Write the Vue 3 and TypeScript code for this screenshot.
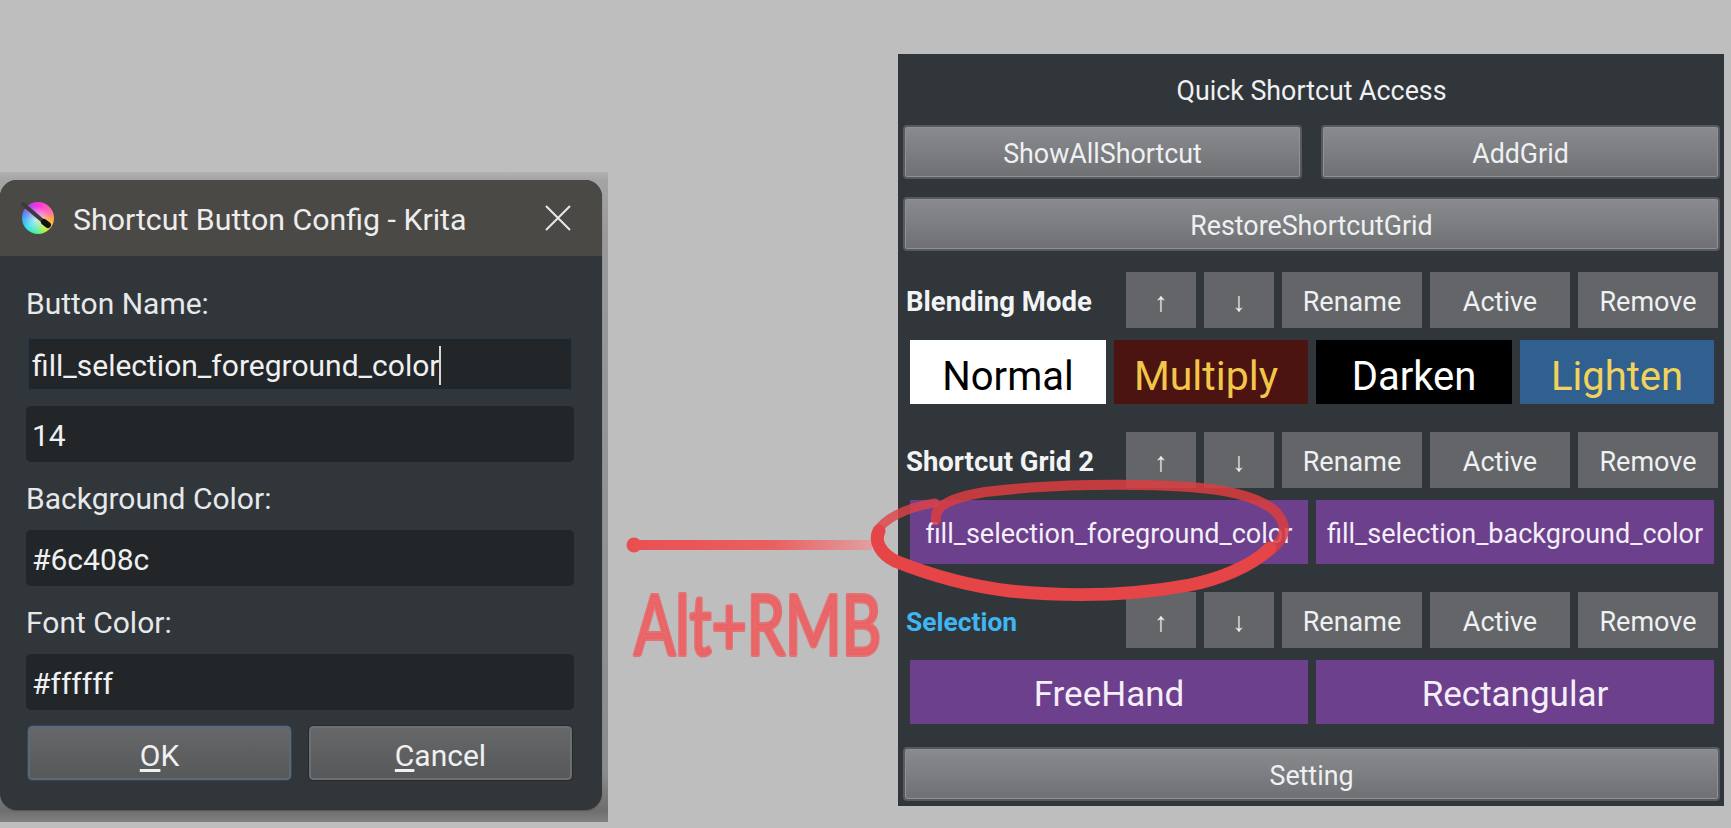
<script setup lang="ts">
interface GridButton {
  text: string
  cls: string
}

interface Section {
  name: string
  nameCls?: string
  grid: string
  buttons: GridButton[]
}

const rowActions = ['↑', '↓', 'Rename', 'Active', 'Remove']

const sections: Section[] = [
  {
    name: 'Blending Mode',
    grid: 'four',
    buttons: [
      { text: 'Normal', cls: 'white big' },
      { text: 'Multiply', cls: 'maroon big' },
      { text: 'Darken', cls: 'black big' },
      { text: 'Lighten', cls: 'blue big' },
    ],
  },
  {
    name: 'Shortcut Grid 2',
    grid: 'two',
    buttons: [
      { text: 'fill_selection_foreground_color', cls: 'purple' },
      { text: 'fill_selection_background_color', cls: 'purple' },
    ],
  },
  {
    name: 'Selection',
    nameCls: 'active-name',
    grid: 'two',
    buttons: [
      { text: 'FreeHand', cls: 'purple mid' },
      { text: 'Rectangular', cls: 'purple mid' },
    ],
  },
]
</script>

<template>
  <div class="page">
    <div class="shadow-frame">
      <div class="dialog">
        <div class="titlebar">
          <div class="logo">
            <svg width="36" height="32" viewBox="0 0 36 32">
              <path d="M3 3 L24 21" stroke="#3a3a3c" stroke-width="4" stroke-linecap="round" />
              <path d="M24 21 L28 24" stroke="#111" stroke-width="6" stroke-linecap="round" />
            </svg>
          </div>
          <span class="title">Shortcut Button Config - Krita</span>
          <svg class="close" width="26" height="26" viewBox="0 0 26 26">
            <path d="M1 1 L25 25 M25 1 L1 25" stroke="#e8e8e8" stroke-width="2" />
          </svg>
        </div>
        <div class="form">
          <div class="label first">Button Name:</div>
          <div class="field focused">fill_selection_foreground_color<i class="caret"></i></div>
          <div class="field second">14</div>
          <div class="label">Background Color:</div>
          <div class="field">#6c408c</div>
          <div class="label">Font Color:</div>
          <div class="field">#ffffff</div>
          <div class="dialog-buttons">
            <button class="dlg-btn ok"><u>O</u>K</button>
            <button class="dlg-btn"><u>C</u>ancel</button>
          </div>
        </div>
      </div>
    </div>

    <div class="panel">
      <div class="panel-title">Quick Shortcut Access</div>
      <div class="top-row">
        <button class="tool-btn">ShowAllShortcut</button>
        <button class="tool-btn">AddGrid</button>
      </div>
      <div class="top-row restore">
        <button class="tool-btn">RestoreShortcutGrid</button>
      </div>

      <div v-for="section in sections" :key="section.name" class="section">
        <div class="section-row">
          <span class="section-name" :class="section.nameCls">{{ section.name }}</span>
          <button v-for="action in rowActions" :key="action" class="row-btn">{{ action }}</button>
        </div>
        <div class="grid" :class="section.grid">
          <div v-for="btn in section.buttons" :key="btn.text" class="grid-btn" :class="btn.cls">{{ btn.text }}</div>
        </div>
      </div>

      <div class="top-row setting">
        <button class="tool-btn">Setting</button>
      </div>
    </div>

    <!-- hand drawn annotation on top of the screenshot -->
    <svg class="sketch" width="1731" height="828" viewBox="0 0 1731 828">
      <defs>
        <linearGradient id="lineFade" x1="626" x2="872" y1="0" y2="0" gradientUnits="userSpaceOnUse">
          <stop offset="0" stop-color="#ea4f50" />
          <stop offset="0.6" stop-color="#e96062" />
          <stop offset="1" stop-color="#e0a0a0" />
        </linearGradient>
        <filter id="soft" x="-5%" y="-5%" width="110%" height="110%">
          <feGaussianBlur stdDeviation="0.7" />
        </filter>
      </defs>
      <g filter="url(#soft)">
        <circle cx="634" cy="545" r="7.5" fill="#ea4f50" />
        <rect x="634" y="540" width="238" height="10" fill="url(#lineFade)" />
        <path
          d="M936 520 C934 506 950 498 985 492 C1050 484 1130 483 1190 487 C1245 491 1284 505 1284 530 C1282 552 1240 572 1190 584"
          fill="none"
          stroke="#dc3c40"
          stroke-opacity="0.85"
          stroke-width="10"
          stroke-linecap="round"
        />
        <path
          d="M880 527 C892 514 914 506 935 503"
          fill="none"
          stroke="#e04246"
          stroke-opacity="0.8"
          stroke-width="9"
          stroke-linecap="round"
        />
        <path
          d="M1270 548 C1250 568 1215 580 1190 585 C1130 596 1070 597 1010 591 C960 585 920 571 895 561 C880 553 874 541 879 531"
          fill="none"
          stroke="#e54447"
          stroke-width="13"
          stroke-linecap="round"
        />
      </g>
      <text class="sketch-text" transform="translate(634 655) scale(1 1.38)">Alt+RMB</text>
    </svg>
  </div>
</template>

<style scoped>
.page {
  position: relative;
  display: flex;
  align-items: flex-start;
  width: 1731px;
  height: 828px;
  overflow: hidden;
  background: #bebebe;
  font-family: Roboto, "Noto Sans", sans-serif;
  color: #eff0f1;
}

.shadow-frame {
  flex: none;
  width: 608px;
  height: 650px;
  margin-top: 172px;
  padding-top: 8px;
  box-sizing: border-box;
  background: linear-gradient(#b2b2b2 0, #a4a4a4 8px, #9a9a9a 60px, #8c8c8c 600px, #6e6e6e 638px, #808080 650px);
}

.dialog {
  width: 602px;
  height: 630px;
  border-radius: 17px;
  background: #31363b;
  overflow: hidden;
  box-shadow: 0 1px 1px #5a5654;
}

.titlebar {
  display: flex;
  align-items: center;
  height: 76px;
  background: #4b4946;
}

.logo {
  position: relative;
  flex: none;
  width: 32px;
  height: 32px;
  margin-left: 22px;
  border-radius: 50%;
  background:
    radial-gradient(circle at 45% 55%, rgba(225, 235, 240, 0.85) 0, rgba(225, 235, 240, 0) 55%),
    conic-gradient(#ff2fe0 0deg, #ff6bb0 60deg, #ffc030 110deg, #b8f040 150deg, #40f0a0 190deg, #20e0f0 230deg, #4a90f0 280deg, #c040f0 330deg, #ff2fe0 360deg);
}

.logo svg {
  position: absolute;
  left: -2px;
  top: -1px;
}

.title {
  margin-left: 19px;
  padding-top: 3px;
  font-size: 30.3px;
  color: #ededed;
}

.close {
  margin-left: auto;
  margin-right: 31px;
}

.form {
  display: flex;
  flex-direction: column;
  padding: 29px 0 30px 26px;
}

.label {
  height: 36px;
  margin: 18px 0 14px 0;
  font-size: 30px;
  line-height: 37px;
  color: #e6e8ea;
}

.label.first {
  margin-top: 0;
  margin-bottom: 15px;
}

.field {
  display: flex;
  align-items: center;
  box-sizing: border-box;
  width: 548px;
  height: 56px;
  padding-top: 2px;
  padding-left: 6px;
  border-radius: 5px;
  background: #232629;
  font-size: 30px;
  color: #eff0f1;
}

.field.focused {
  border: 2px solid transparent;
  background-clip: padding-box;
  box-shadow: inset 0 0 0 1px #22384c;
  padding-left: 4px;
}

.field.second {
  margin-top: 14px;
}

.caret {
  width: 2px;
  height: 39px;
  background: #d8d8d8;
}

.dialog-buttons {
  display: flex;
  gap: 18px;
  margin: 16px 30px 0 2px;
}

.dlg-btn {
  flex: 1;
  height: 54px;
  box-sizing: border-box;
  padding: 4px 0 0;
  border: 2px solid #6e6f70;
  border-radius: 4px;
  background: linear-gradient(#666769, #57585a);
  outline: 1px solid #26292c;
  font-family: inherit;
  font-size: 30px;
  color: #eff0f1;
}

.dlg-btn.ok {
  border-color: #5c6873;
  outline-color: #33465a;
}

.dlg-btn u {
  text-underline-offset: 3px;
}

.panel {
  flex: none;
  box-sizing: border-box;
  width: 826px;
  height: 752px;
  margin: 54px 0 0 290px;
  padding: 0 4px 5px 5px;
  background: #31363b;
}

.panel-title {
  height: 71px;
  padding-top: 19px;
  box-sizing: border-box;
  font-size: 26.8px;
  line-height: 36px;
  text-align: center;
  color: #eff0f1;
}

.top-row {
  display: flex;
  gap: 19px;
}

.top-row.restore {
  margin-top: 18px;
}

.top-row.setting {
  margin-top: 23px;
}

.tool-btn {
  flex: 1;
  height: 54px;
  box-sizing: border-box;
  padding: 3px 0 0;
  border: 2px solid #565a5e;
  border-radius: 4px;
  background: linear-gradient(#898b8e, #6e7073);
  box-shadow: inset 0 0 0 1px #8f9194;
  font-family: inherit;
  font-size: 26.8px;
  color: #eff0f1;
}

.section {
  margin-top: 28px;
}

.top-row.restore + .section {
  margin-top: 21px;
}

.section-row {
  display: grid;
  grid-template-columns: 211px 70px 70px 140px 140px 140px;
  column-gap: 8px;
  align-items: center;
  padding-left: 4px;
}

.section-name {
  margin-left: -1px;
  padding-top: 3px;
  font-size: 27.5px;
  font-weight: 700;
  white-space: nowrap;
  color: #f2f3f4;
}

.section-name.active-name {
  font-size: 26.4px;
  color: #3fb6f2;
}

.row-btn {
  height: 56px;
  padding: 3px 0 0;
  border: none;
  background: #636568;
  font-family: inherit;
  font-size: 27px;
  color: #eff0f1;
}

.grid {
  display: grid;
  gap: 8px;
  margin: 12px 6px 0 7px;
}

.grid.four {
  grid-template-columns: 196px 194px 196px 194px;
}

.grid.two {
  grid-template-columns: repeat(2, 1fr);
}

.grid-btn {
  display: flex;
  align-items: center;
  justify-content: center;
  box-sizing: border-box;
  height: 64px;
  padding-top: 4px;
  font-size: 27px;
  white-space: nowrap;
}

.grid-btn.big {
  padding-top: 8px;
  font-size: 40px;
}

.grid-btn.mid {
  font-size: 35px;
}

.grid-btn.maroon {
  padding-right: 10px;
  font-size: 41px;
}

.white {
  background: #fff;
  color: #000;
}

.maroon {
  background: #4b1410;
  color: #f2c64b;
}

.black {
  background: #000;
  color: #fff;
}

.blue {
  background: #2f6090;
  color: #f2d25a;
}

.purple {
  background: #6c408c;
  color: #f4eef8;
}

.sketch {
  position: absolute;
  left: 0;
  top: 0;
  pointer-events: none;
}

.sketch-text {
  font-family: Lato, Roboto, sans-serif;
  font-size: 61px;
  font-weight: 400;
  fill: #ec5f61;
  fill-opacity: 0.9;
  stroke: #ec5f61;
  stroke-width: 3px;
  stroke-opacity: 0.8;
  stroke-linejoin: round;
}
</style>

<style>
html,
body {
  background: #bebebe;
}
</style>
